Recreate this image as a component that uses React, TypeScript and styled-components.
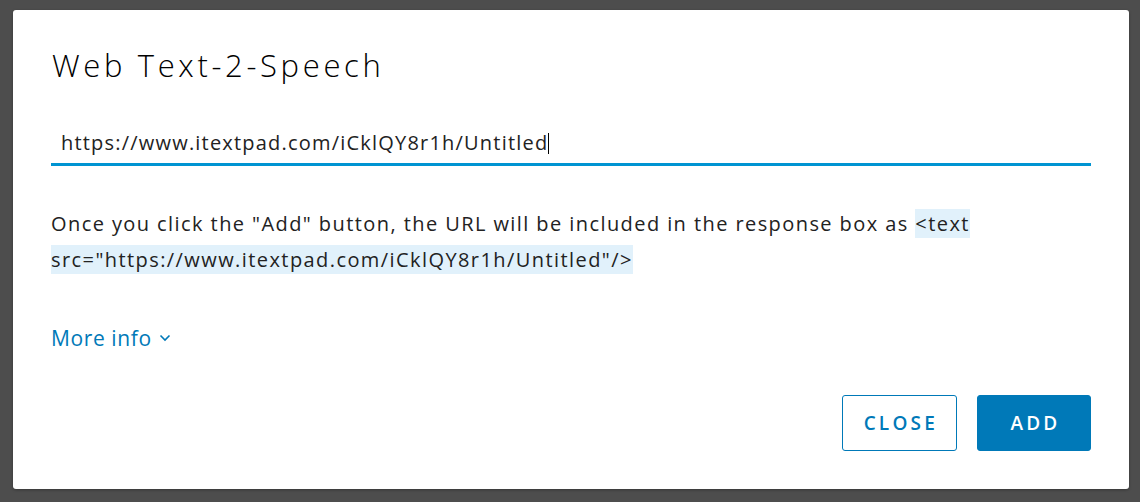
import styled, { createGlobalStyle } from 'styled-components';

const GlobalStyle = createGlobalStyle`
  html, body {
    margin: 0;
    padding: 0;
    background: #4d4d4d;
  }
  * {
    box-sizing: border-box;
  }
`;

const Backdrop = styled.div`
  width: 1140px;
  height: 502px;
  padding: 10px 11px 13px 13px;
  background: #4d4d4d;
  display: flex;
  font-family: 'Open Sans', 'Liberation Sans', sans-serif;
`;

const Modal = styled.div`
  flex: 1;
  background: #fff;
  border-radius: 3px;
  padding: 0 38px 38px 38px;
  display: flex;
  flex-direction: column;
  box-shadow: 0 1px 3px rgba(0, 0, 0, 0.3);
`;

const Title = styled.h3`
  margin: 36px 0 0 1px;
  font-size: 31px;
  line-height: 38px;
  font-weight: 300;
  letter-spacing: 3.65px;
  color: #000;
`;

const Field = styled.div`
  margin-top: 45px;
  padding: 0 0 6px 10px;
  border-bottom: 3px solid #0094d2;
  font-size: 20px;
  line-height: 28px;
  letter-spacing: 1.2px;
  color: #222;
  display: flex;
  align-items: center;
`;

const Caret = styled.span`
  display: inline-block;
  width: 1px;
  height: 21px;
  background: #000;
`;

const Description = styled.p`
  margin: 40px 0 0;
  font-size: 20px;
  line-height: 36px;
  letter-spacing: 1.42px;
  color: #222;
`;

const Code = styled.span`
  background: #e1f1fb;
  padding: 1px 0;
`;

const MoreInfo = styled.a`
  margin-top: 46px;
  display: inline-flex;
  align-items: center;
  gap: 7px;
  align-self: flex-start;
  font-size: 21px;
  line-height: 28px;
  letter-spacing: 0.6px;
  color: #0079b8;
  text-decoration: none;
`;

const Footer = styled.div`
  margin-top: auto;
  display: flex;
  justify-content: flex-end;
  gap: 20px;
`;

const Button = styled.button<{ $primary?: boolean }>`
  height: 56px;
  min-width: 114px;
  padding: 0 18px;
  border-radius: 3px;
  border: 1px solid #0079b8;
  background: ${(p) => (p.$primary ? '#0079b8' : '#fff')};
  color: ${(p) => (p.$primary ? '#fff' : '#0079b8')};
  font-family: 'Open Sans', 'Liberation Sans', sans-serif;
  font-size: 19px;
  font-weight: 600;
  letter-spacing: 3.2px;
  text-indent: 3px;
  cursor: pointer;
`;

const url = 'https://www.itextpad.com/iCklQY8r1h/Untitled';

export default function App() {
  return (
    <>
      <GlobalStyle />
      <Backdrop>
        <Modal>
          <Title>Web Text-2-Speech</Title>
          <Field>
            {url}
            <Caret />
          </Field>
          <Description>
            Once you click the "Add" button, the URL will be included in the
            response box as <Code>{`<text src="${url}"/>`}</Code>
          </Description>
          <MoreInfo href='#'>
            More info
            <svg width='12' height='8' viewBox='0 0 12 8' fill='none'>
              <path d='M1.5 1.5 L6 6 L10.5 1.5' stroke='#0079b8' strokeWidth='1.6' />
            </svg>
          </MoreInfo>
          <Footer>
            <Button>CLOSE</Button>
            <Button $primary>ADD</Button>
          </Footer>
        </Modal>
      </Backdrop>
    </>
  );
}
